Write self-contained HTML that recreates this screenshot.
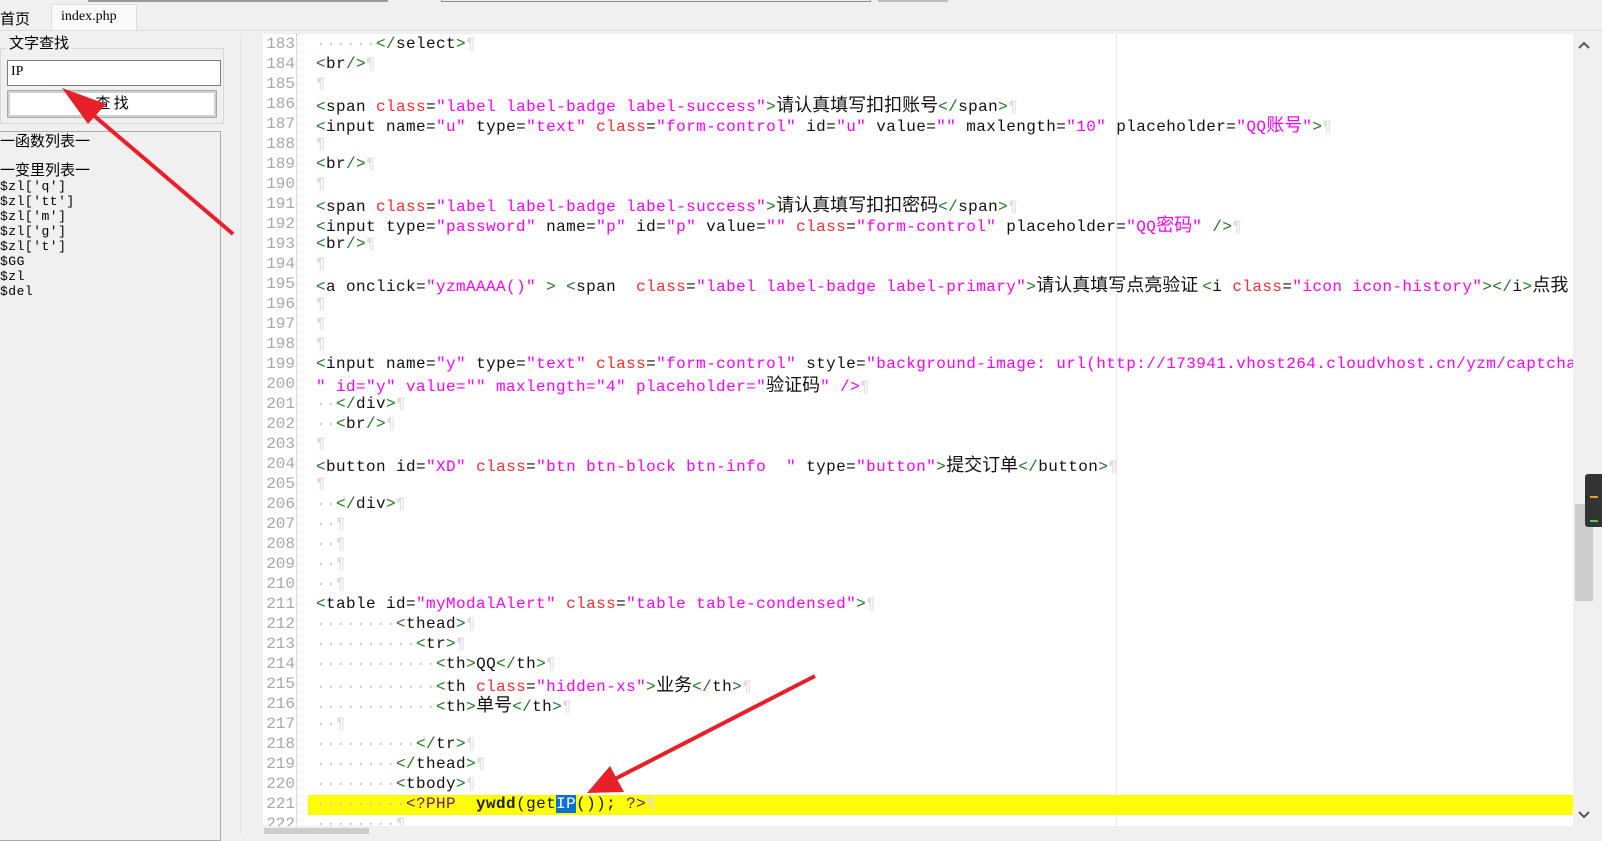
<!DOCTYPE html>
<html><head><meta charset="utf-8">
<style>
*{margin:0;padding:0;box-sizing:border-box}
body{width:1602px;height:834px;background:#f0f0f0;position:relative;overflow:hidden;font-family:"Liberation Sans","Noto Sans CJK SC",sans-serif}
.abs{position:absolute}
.ed{position:absolute;left:263px;top:34px;width:1310px;height:792px;background:#fff;overflow:hidden}
.gut{position:absolute;left:0;top:0;width:34px;height:792px;border-right:1px dotted #bbb;background:#fff}
.ln{position:absolute;left:0;width:32px;text-align:right;font-family:"Liberation Mono",monospace;font-size:16px;color:#a8a8a8;height:20px;line-height:20px}
.cl{position:absolute;left:53px;white-space:pre;font-family:"Liberation Mono",monospace;font-size:16px;letter-spacing:0.4px;color:#111;height:20px;line-height:20px}
.g{color:#1a7a1a}.r{color:#ff2a2a}.m{color:#ff00ff}.p{color:#ddd}.d{color:#ccc}
.c{font-family:"Noto Sans CJK SC",sans-serif;font-size:18px;letter-spacing:0;color:#111}
.cm{font-family:"Noto Sans CJK SC",sans-serif;font-size:18px;letter-spacing:0;color:#ff00ff}
.lst{font-family:"Liberation Mono","Noto Sans CJK SC",monospace;font-size:13px;line-height:15px;color:#000;white-space:pre}
</style></head><body>
<div class="abs" style="left:88px;top:0;width:300px;height:2px;background:#999"></div>
<div class="abs" style="left:441px;top:0;width:430px;height:2px;border:1px solid #888;border-top:none"></div>
<div class="abs" style="left:878px;top:0;width:70px;height:2px;background:#bbb"></div>
<div class="abs" style="left:0;top:8px;font-size:15px;font-family:'Noto Sans CJK SC',sans-serif">首页</div>
<div class="abs" style="left:51px;top:4px;width:86px;height:27px;background:#fafafa;border:1px solid #ddd;border-bottom:none;font-family:'Liberation Serif',serif;font-size:14px;padding:4px 0 0 9px">index.php</div>
<div class="abs" style="left:0;top:30px;width:1602px;height:1px;background:#ddd"></div>
<div class="abs" style="left:0;top:48px;width:224px;height:76px;border:1px solid #d8d8d8"></div>
<div class="abs" style="left:6px;top:32px;padding:0 3px;background:#f0f0f0;font-size:15px;font-family:'Noto Sans CJK SC',sans-serif">文字查找</div>
<div class="abs" style="left:7px;top:60px;width:214px;height:26px;background:#fff;border:1px solid #7a7a7a;font-family:'Liberation Serif',serif;font-size:14px;padding:3px 0 0 3px">IP</div>
<div class="abs" style="left:8px;top:91px;width:208px;height:26px;background:#fff;border:2px solid #d0d0d0;outline:1px solid #aaa;text-align:center;font-size:15px;font-family:'Noto Sans CJK SC',sans-serif;line-height:20px">查 找</div>
<div class="abs" style="left:-1px;top:131px;width:222px;height:710px;border:1px solid #aaa;background:#f0f0f0"></div>
<div class="abs lst" style="left:0;top:134px;font-size:15px;line-height:18px">一函数列表一</div>
<div class="abs lst" style="left:0;top:163px;font-size:15px;line-height:18px">一变里列表一</div>
<div class="abs lst" style="left:0;top:179px;letter-spacing:0.5px">$zl['q']
$zl['tt']
$zl['m']
$zl['g']
$zl['t']
$GG
$zl
$del</div>
<div class="abs" style="left:240px;top:34px;width:1px;height:800px;background:#e4e4e4"></div>
<div class="ed">
<div class="gut"></div>
<div class="abs" style="left:853px;top:0;width:1px;height:792px;background:#e6e6e6"></div>
<div class="abs" style="left:45px;top:761px;width:1265px;height:20px;background:#ffff00"></div>
<div class="ln" style="top:0">183</div><div class="ln" style="top:20px">184</div><div class="ln" style="top:40px">185</div><div class="ln" style="top:60px">186</div><div class="ln" style="top:80px">187</div><div class="ln" style="top:100px">188</div><div class="ln" style="top:120px">189</div><div class="ln" style="top:140px">190</div><div class="ln" style="top:160px">191</div><div class="ln" style="top:180px">192</div><div class="ln" style="top:200px">193</div><div class="ln" style="top:220px">194</div><div class="ln" style="top:240px">195</div><div class="ln" style="top:260px">196</div><div class="ln" style="top:280px">197</div><div class="ln" style="top:300px">198</div><div class="ln" style="top:320px">199</div><div class="ln" style="top:340px">200</div><div class="ln" style="top:360px">201</div><div class="ln" style="top:380px">202</div><div class="ln" style="top:400px">203</div><div class="ln" style="top:420px">204</div><div class="ln" style="top:440px">205</div><div class="ln" style="top:460px">206</div><div class="ln" style="top:480px">207</div><div class="ln" style="top:500px">208</div><div class="ln" style="top:520px">209</div><div class="ln" style="top:540px">210</div><div class="ln" style="top:560px">211</div><div class="ln" style="top:580px">212</div><div class="ln" style="top:600px">213</div><div class="ln" style="top:620px">214</div><div class="ln" style="top:640px">215</div><div class="ln" style="top:660px">216</div><div class="ln" style="top:680px">217</div><div class="ln" style="top:700px">218</div><div class="ln" style="top:720px">219</div><div class="ln" style="top:740px">220</div><div class="ln" style="top:760px">221</div><div class="ln" style="top:780px">222</div>

<div class="cl" style="top:0"><span class="d">······</span><span class="g">&lt;/</span>select<span class="g">&gt;</span><span class="p">¶</span></div>
<div class="cl" style="top:20px"><span class="g">&lt;</span>br<span class="g">/&gt;</span><span class="p">¶</span></div>
<div class="cl" style="top:40px"><span class="p">¶</span></div>
<div class="cl" style="top:60px"><span class="g">&lt;</span>span <span class="r">class</span>=<span class="m">"label label-badge label-success"</span><span class="g">&gt;</span><span class="c">请认真填写扣扣账号</span><span class="g">&lt;/</span>span<span class="g">&gt;</span><span class="p">¶</span></div>
<div class="cl" style="top:80px"><span class="g">&lt;</span>input name=<span class="m">"u"</span> type=<span class="m">"text"</span> <span class="r">class</span>=<span class="m">"form-control"</span> id=<span class="m">"u"</span> value=<span class="m">""</span> maxlength=<span class="m">"10"</span> placeholder=<span class="m">"QQ</span><span class="cm">账号</span><span class="m">"</span><span class="g">&gt;</span><span class="p">¶</span></div>
<div class="cl" style="top:100px"><span class="p">¶</span></div>
<div class="cl" style="top:120px"><span class="g">&lt;</span>br<span class="g">/&gt;</span><span class="p">¶</span></div>
<div class="cl" style="top:140px"><span class="p">¶</span></div>
<div class="cl" style="top:160px"><span class="g">&lt;</span>span <span class="r">class</span>=<span class="m">"label label-badge label-success"</span><span class="g">&gt;</span><span class="c">请认真填写扣扣密码</span><span class="g">&lt;/</span>span<span class="g">&gt;</span><span class="p">¶</span></div>
<div class="cl" style="top:180px"><span class="g">&lt;</span>input type=<span class="m">"password"</span> name=<span class="m">"p"</span> id=<span class="m">"p"</span> value=<span class="m">""</span> <span class="r">class</span>=<span class="m">"form-control"</span> placeholder=<span class="m">"QQ</span><span class="cm">密码</span><span class="m">"</span> <span class="g">/&gt;</span><span class="p">¶</span></div>
<div class="cl" style="top:200px"><span class="g">&lt;</span>br<span class="g">/&gt;</span><span class="p">¶</span></div>
<div class="cl" style="top:220px"><span class="p">¶</span></div>
<div class="cl" style="top:240px"><span class="g">&lt;</span>a onclick=<span class="m">"yzmAAAA()"</span> <span class="g">&gt;</span> <span class="g">&lt;</span>span  <span class="r">class</span>=<span class="m">"label label-badge label-primary"</span><span class="g">&gt;</span><span class="c">请认真填写点亮验证 </span><span class="g">&lt;</span>i <span class="r">class</span>=<span class="m">"icon icon-history"</span><span class="g">&gt;&lt;/</span>i<span class="g">&gt;</span><span class="c">点我</span></div>
<div class="cl" style="top:260px"><span class="p">¶</span></div>
<div class="cl" style="top:280px"><span class="p">¶</span></div>
<div class="cl" style="top:300px"><span class="p">¶</span></div>
<div class="cl" style="top:320px"><span class="g">&lt;</span>input name=<span class="m">"y"</span> type=<span class="m">"text"</span> <span class="r">class</span>=<span class="m">"form-control"</span> style=<span class="m">"background-image: url(http://173941.vhost264.cloudvhost.cn/yzm/captcha.php)</span></div>
<div class="cl" style="top:340px"><span class="m">" id="y" value="" maxlength="4" placeholder="</span><span class="c">验证码</span><span class="m">" /&gt;</span><span class="p">¶</span></div>
<div class="cl" style="top:360px"><span class="d">··</span><span class="g">&lt;/</span>div<span class="g">&gt;</span><span class="p">¶</span></div>
<div class="cl" style="top:380px"><span class="d">··</span><span class="g">&lt;</span>br<span class="g">/&gt;</span><span class="p">¶</span></div>
<div class="cl" style="top:400px"><span class="p">¶</span></div>
<div class="cl" style="top:420px"><span class="g">&lt;</span>button id=<span class="m">"XD"</span> <span class="r">class</span>=<span class="m">"btn btn-block btn-info  "</span> type=<span class="m">"button"</span><span class="g">&gt;</span><span class="c">提交订单</span><span class="g">&lt;/</span>button<span class="g">&gt;</span><span class="p">¶</span></div>
<div class="cl" style="top:440px"><span class="p">¶</span></div>
<div class="cl" style="top:460px"><span class="d">··</span><span class="g">&lt;/</span>div<span class="g">&gt;</span><span class="p">¶</span></div>
<div class="cl" style="top:480px"><span class="d">··</span><span class="p">¶</span></div>
<div class="cl" style="top:500px"><span class="d">··</span><span class="p">¶</span></div>
<div class="cl" style="top:520px"><span class="d">··</span><span class="p">¶</span></div>
<div class="cl" style="top:540px"><span class="d">··</span><span class="p">¶</span></div>
<div class="cl" style="top:560px"><span class="g">&lt;</span>table id=<span class="m">"myModalAlert"</span> <span class="r">class</span>=<span class="m">"table table-condensed"</span><span class="g">&gt;</span><span class="p">¶</span></div>
<div class="cl" style="top:580px"><span class="d">········</span><span class="g">&lt;</span>thead<span class="g">&gt;</span><span class="p">¶</span></div>
<div class="cl" style="top:600px"><span class="d">··········</span><span class="g">&lt;</span>tr<span class="g">&gt;</span><span class="p">¶</span></div>
<div class="cl" style="top:620px"><span class="d">············</span><span class="g">&lt;</span>th<span class="g">&gt;</span>QQ<span class="g">&lt;/</span>th<span class="g">&gt;</span><span class="p">¶</span></div>
<div class="cl" style="top:640px"><span class="d">············</span><span class="g">&lt;</span>th <span class="r">class</span>=<span class="m">"hidden-xs"</span><span class="g">&gt;</span><span class="c">业务</span><span class="g">&lt;/</span>th<span class="g">&gt;</span><span class="p">¶</span></div>
<div class="cl" style="top:660px"><span class="d">············</span><span class="g">&lt;</span>th<span class="g">&gt;</span><span class="c">单号</span><span class="g">&lt;/</span>th<span class="g">&gt;</span><span class="p">¶</span></div>
<div class="cl" style="top:680px"><span class="d">··</span><span class="p">¶</span></div>
<div class="cl" style="top:700px"><span class="d">··········</span><span class="g">&lt;/</span>tr<span class="g">&gt;</span><span class="p">¶</span></div>
<div class="cl" style="top:720px"><span class="d">········</span><span class="g">&lt;/</span>thead<span class="g">&gt;</span><span class="p">¶</span></div>
<div class="cl" style="top:740px"><span class="d">········</span><span class="g">&lt;</span>tbody<span class="g">&gt;</span><span class="p">¶</span></div>
<div class="cl" style="top:760px"><span class="d">·········</span><span style="color:#6a1a8a">&lt;?PHP</span>  <b style="color:#222">ywdd</b>(get<span style="background:#0a6fd8;color:#fff">IP</span>()); <span style="color:#6a1a8a">?&gt;</span><span class="p">¶</span></div>
<div class="cl" style="top:780px"><span class="d">········</span><span class="p">¶</span></div>
</div>
<div class="abs" style="left:1573px;top:34px;width:24px;height:792px;background:#f0f0f0"></div>
<svg class="abs" style="left:1576px;top:38px" width="16" height="14"><path d="M3 10 L8 5 L13 10" stroke="#555" stroke-width="2" fill="none"/></svg>
<svg class="abs" style="left:1576px;top:808px" width="16" height="14"><path d="M3 4 L8 9 L13 4" stroke="#555" stroke-width="2" fill="none"/></svg>
<div class="abs" style="left:1575px;top:504px;width:18px;height:97px;background:#cdcdcd"></div>
<div class="abs" style="left:1585px;top:474px;width:20px;height:53px;background:#333;border-radius:3px"></div>
<div class="abs" style="left:1590px;top:496px;width:8px;height:2px;background:#e8a020"></div>
<div class="abs" style="left:1590px;top:520px;width:8px;height:2px;background:#5c5"></div>
<div class="abs" style="left:246px;top:826px;width:1330px;height:8px;background:#f0f0f0"></div>
<div class="abs" style="left:264px;top:828px;width:105px;height:6px;background:#cdcdcd"></div>
<svg class="abs" style="left:0;top:0" width="1602" height="834">
<line x1="233" y1="234" x2="85" y2="108" stroke="#e8202a" stroke-width="4"/>
<polygon points="62,88 106,104 88,124" fill="#e8202a"/>
<line x1="815" y1="676" x2="615" y2="779" stroke="#e8202a" stroke-width="4"/>
<polygon points="587,793 610,766 624,792" fill="#e8202a"/>
</svg>
</body></html>
